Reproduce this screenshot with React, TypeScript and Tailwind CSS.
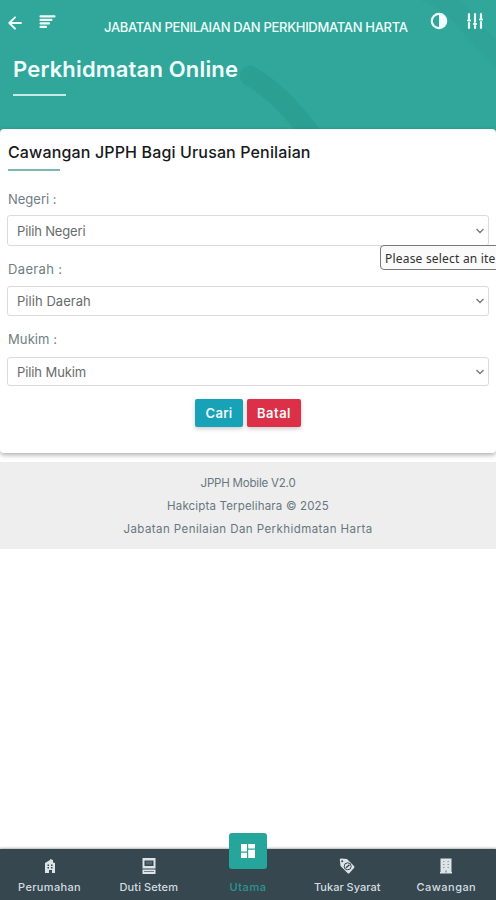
import React from "react";

const fields = [
  { label: 'Negeri :', placeholder: 'Pilih Negeri', labelClass: 'tracking-[0px]', textClass: 'tracking-[-0.15px]', box: 'mt-[6px] h-[31px]' },
  { label: 'Daerah :', placeholder: 'Pilih Daerah', labelClass: 'tracking-[0.35px]', textClass: 'tracking-[0.05px]', box: 'mt-[7px] h-[30px]' },
  { label: 'Mukim :', placeholder: 'Pilih Mukim', labelClass: 'tracking-[0.1px]', textClass: 'tracking-[-0.1px]', box: 'mt-[8px] h-[29px]' },
];

const BuildingIcon = () => (
  <svg viewBox="0 0 12 16" className="h-4 w-3" fill="#dce4e8">
    <path d="M1 15V5l5-3V1l3 1v2.500l2 .5v10H8v-3H5v3z" />
    <path d="M3.500 6.500H5V8H3.500zM7 6.500h1.500V8H7zM3.500 9H5v1.500H3.500zM7 9h1.500v1.500H7z" fill="#37474f" />
  </svg>
);

const StampIcon = () => (
  <svg viewBox="0 0 14 16" className="h-4 w-3.5" fill="#dce4e8">
    <path fillRule="evenodd" d="M.5 0h13v10.500H.5zM2.500 2.500v5.500h9V2.500z" />
    <path d="M4 3.500h6v3H4z" opacity=".2" />
    <path d="M.5 11.500h13V16H.5z" />
    <path d="M2 13h10v1H2z" fill="#72828b" />
  </svg>
);

const TagIcon = () => (
  <svg viewBox="0 0 16 16" className="h-4 w-4">
    <path d="M.8 1.800Q.8.500 2.200.500L8 1l7 7q1 1 0 2l-4.500 5q-1 1-2 0L1.500 8z" fill="#dce4e8" />
    <circle cx="3.200" cy="3.200" r="1" fill="#37474f" />
    <circle cx="8.700" cy="8.300" r="3.500" fill="none" stroke="#37474f" strokeWidth="1" />
    <path d="m7 9.800 3.500-3" stroke="#37474f" strokeWidth="1.500" />
  </svg>
);

const OfficeIcon = () => (
  <svg viewBox="0 0 12 16" className="h-4 w-3">
    <path d="M.5.5h11V14h.5v1.500H0V14h.5z" fill="#dce4e8" />
    <path d="M3 3h1.500v1H3zM7.500 3H9v1H7.500zM3 6h1.500v1H3zM7.500 6H9v1H7.500zM3 9h1.500v1H3zM7.500 9H9v1H7.500zM5.200 12.500h1.600v2H5.200z" fill="#8d9ba2" />
  </svg>
);

const navItems = [
  { name: 'Perumahan', icon: <BuildingIcon />, spacing: 'tracking-[0.35px]' },
  { name: 'Duti Setem', icon: <StampIcon />, spacing: 'tracking-[0.1px]' },
  { name: 'Utama', icon: null, spacing: 'tracking-[0.6px]' },
  { name: 'Tukar Syarat', icon: <TagIcon />, spacing: 'tracking-[0px]' },
  { name: 'Cawangan', icon: <OfficeIcon />, spacing: 'tracking-[0.45px]' },
];

function Header() {
  return (
    <header className="relative h-[129px] shrink-0 overflow-hidden bg-[#31a69a] text-[#effffc]">
      {/* faint strokes behind the title */}
      <svg viewBox="0 0 496 129" className="absolute inset-0 h-full w-full" fill="none">
        <path d="M250 76q28 15 62 59" stroke="#2a9f92" strokeWidth="20" strokeLinecap="round" />
        <path d="M425-8q25 8 42 30t39 40" stroke="#2fa397" strokeWidth="20" />
      </svg>
      <div className="relative flex h-[45px] items-start">
        <svg viewBox="0 0 14 14" className="mt-4 ml-[8px] h-[14px] w-[14px] shrink-0" fill="none" stroke="currentColor" strokeWidth="1.900" strokeLinecap="round" strokeLinejoin="round">
          <path d="M13 7H1.500M7 1.300 1.300 7 7 12.700" />
        </svg>
        <svg viewBox="0 0 17 14" className="mt-[15px] ml-[17px] h-[14px] w-[17px] shrink-0" fill="none" stroke="currentColor" strokeWidth="2.100" strokeLinecap="round">
          <path d="M1.500 1.400h14M1.500 4.900h11M1.500 8.400h8.500M1.500 11.900h5.500" />
        </svg>
        <p className="mt-[18px] ml-[48px] w-[304px] text-[13px] leading-[18px] font-medium whitespace-nowrap tracking-[-0.32px]">JABATAN PENILAIAN DAN PERKHIDMATAN HARTA</p>
        <svg viewBox="0 0 18 18" className="mt-[12px] ml-[22px] h-[18px] w-[18px] shrink-0">
          <circle cx="9" cy="9" r="7.200" fill="none" stroke="currentColor" strokeWidth="2.200" />
          <path d="M9 2a7 7 0 0 1 0 14z" fill="currentColor" />
        </svg>
        <svg viewBox="0 0 18 18" className="mt-[12px] ml-[18px] h-[18px] w-[18px] shrink-0" fill="none" stroke="currentColor" strokeWidth="2.200" strokeLinecap="round">
          <path d="M3 2v5M3 11v5M9 2v8M9 14v2M15 2v4M15 10v6M2 8.500h2M8 12h2M14 7.500h2" />
        </svg>
      </div>
      <h1 className="relative mt-[10px] ml-[13px] text-[22px] leading-[28px] font-semibold whitespace-nowrap tracking-[0.17px]">Perkhidmatan Online</h1>
      <div className="relative mt-[11px] ml-[13px] h-[2px] w-[53px] bg-[#c4ebe5]" />
    </header>
  );
}

function App() {
  return (
    <div className="flex h-[900px] w-full flex-col overflow-hidden bg-white font-[Inter,sans-serif]">
      <div className="bg-[#31a69a]">
        <Header />
        <div className="bg-[linear-gradient(#31a69a_6px,#fff_6px)]">
          <main className="relative h-[324px] rounded-[4px] bg-white px-[7px] pt-[12px] shadow-[0_2px_5px_rgba(0,0,0,0.32)]">
            <h2 className="ml-px text-[16px] leading-[22px] font-medium whitespace-nowrap text-[#17191c] tracking-[0.14px]">Cawangan JPPH Bagi Urusan Penilaian</h2>
            <div className="mt-[6px] mb-[18px] ml-px h-[1.500px] w-[52px] bg-[#78b8b1]" />
            <form>
              {fields.map((field) => (
                <div key={field.label} className="mb-[13px]">
                  <label className={`ml-px block text-[13px] leading-5 text-[#6f7e83] ${field.labelClass}`}>{field.label}</label>
                  <div className={`flex items-center justify-between rounded-[3px] border border-[#d9dcdd] pr-[3px] pl-[9px] ${field.box}`}>
                    <span className={`mt-[3px] text-[13px] text-[#686b6c] ${field.textClass}`}>{field.placeholder}</span>
                    <svg viewBox="0 0 10 8" className="mt-px h-2 w-2.5" fill="none" stroke="#777" strokeWidth="1.300">
                      <path d="m1.500 2 3.500 3.500L8.500 2" />
                    </svg>
                  </div>
                </div>
              ))}
              <div className="flex justify-center gap-[4px] text-[13px] font-semibold text-[#eefafa]">
                <button type="button" className="h-[28px] w-[48px] rounded-[2px] bg-[#17a2b8] pt-[2px] tracking-[0.3px] shadow-[0_2px_4px_rgba(0,0,0,0.2)]">Cari</button>
                <button type="button" className="h-[28px] w-[54px] rounded-[2px] bg-[#dc3048] pt-[2px] tracking-[0.5px] shadow-[0_2px_4px_rgba(0,0,0,0.2)]">Batal</button>
              </div>
            </form>
            <div className="absolute top-[116px] left-[380px] h-[25px] w-[136px] rounded-[4px] border border-[#77797b] bg-[#fafafa] pl-[4px] font-['Noto_Sans',sans-serif] text-[12px] leading-[25px] whitespace-nowrap text-[#303030] tracking-[0.2px]">Please select an item</div>
          </main>
        </div>
      </div>
      <footer className="mt-[9px] h-[87px] bg-[#eee] pt-[10px] text-center text-[11.5px] leading-[23px] text-[#67777e]">
        <p className="tracking-[-0.2px]">JPPH Mobile V2.0</p>
        <p className="tracking-[0.17px]">Hakcipta Terpelihara © 2025</p>
        <p className="tracking-[0.43px]">Jabatan Penilaian Dan Perkhidmatan Harta</p>
      </footer>
      <nav className="mt-auto grid h-[51px] shrink-0 grid-cols-5 bg-[#37474f] shadow-[0_-1px_2px_rgba(0,0,0,0.3)]">
        {navItems.map((item) => (
          <div key={item.name} className="relative flex flex-col items-center">
            {item.icon
              ? <div className="mt-[9px] flex h-4 items-center">{item.icon}</div>
              : (
                <>
                  <div className="h-[25px]" />
                  <div className="absolute -top-[16px] flex h-[36px] w-[38px] items-center justify-center rounded-[3px] bg-[#26a69a]">
                    <svg viewBox="0 0 14 14" className="h-3.5 w-3.5" fill="#fff">
                      <path d="M0 0h6v7.500H0zM7.200 0H14v4.500H7.200zM0 8.800h6V14H0zM7.200 5.800H14V14H7.200z" />
                    </svg>
                  </div>
                </>
              )}
            <span className={`mt-[4px] text-[11px] leading-[18px] font-medium ${item.spacing} ${item.icon ? 'text-[#d3dde1]' : 'text-[#27988e]'}`}>{item.name}</span>
          </div>
        ))}
      </nav>
    </div>
  );
}

export default App;
